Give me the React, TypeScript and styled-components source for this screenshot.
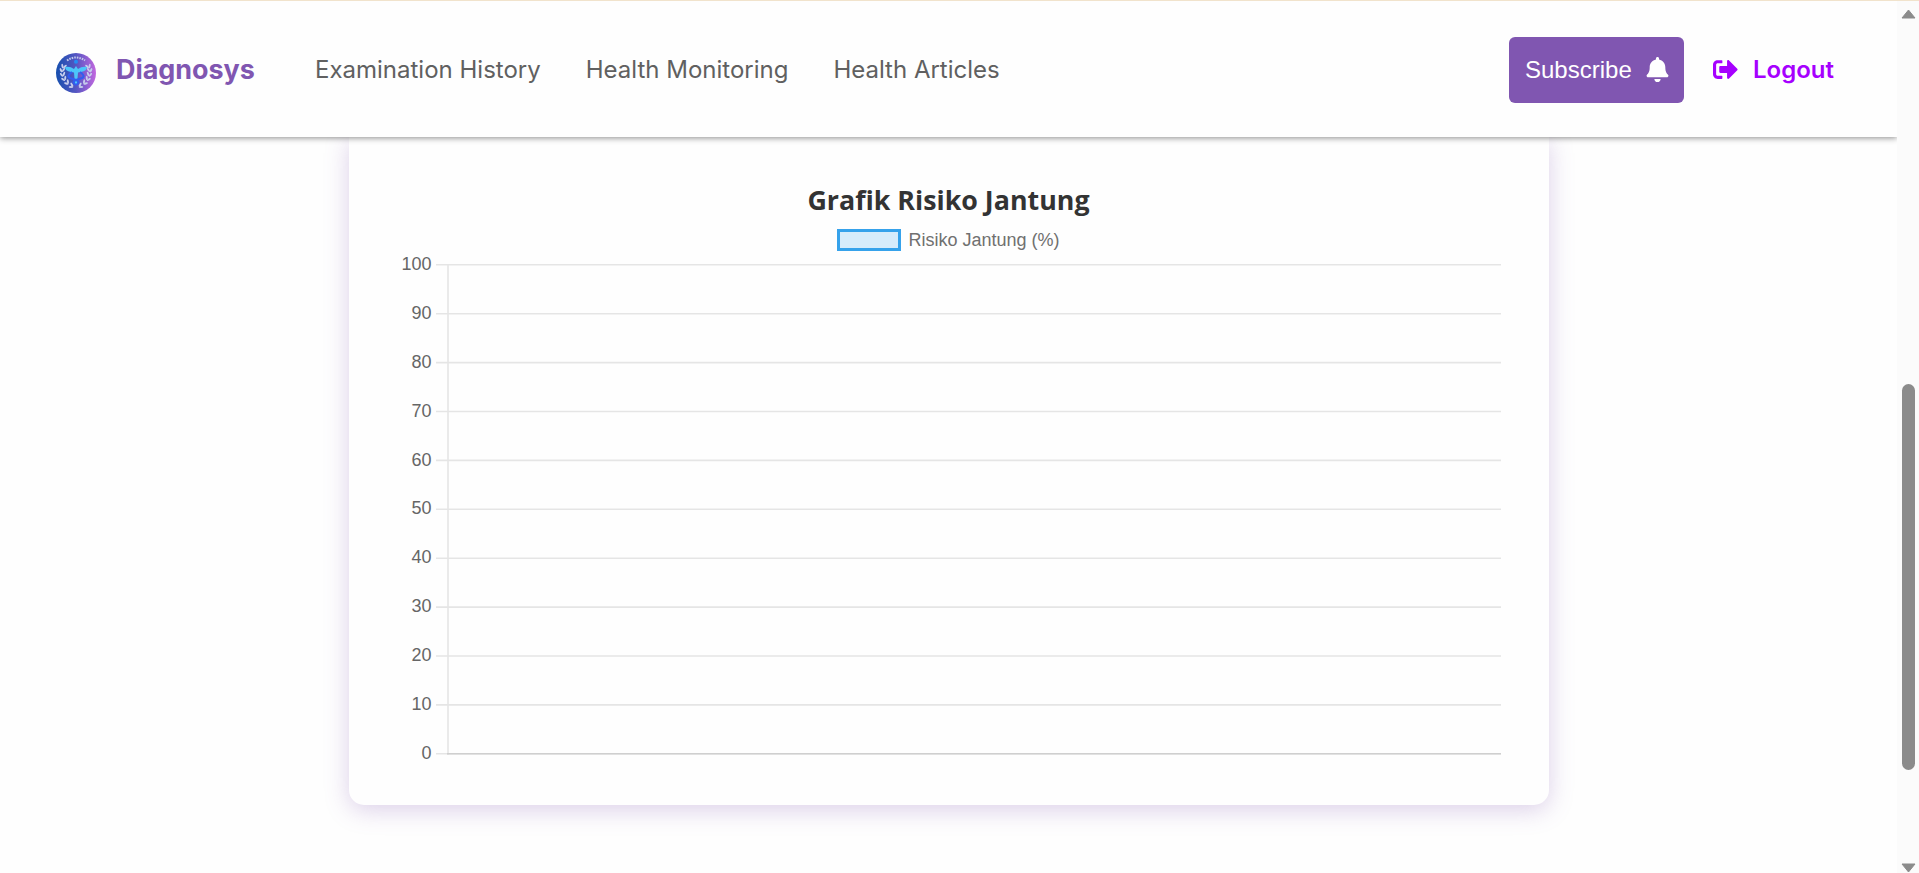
import React from "react";
import styled, { createGlobalStyle } from "styled-components";
import { FaBell, FaSignOutAlt } from "react-icons/fa";

const GlobalStyle = createGlobalStyle`
  * { box-sizing: border-box; }
  body { margin: 0; background: #fefefe; overflow: hidden; }
`;

const Window = styled.div`
  display: grid;
  grid-template-columns: 1897px 22px;
  height: 873px;
  overflow: hidden;
  border-top: 1px solid #f1e3cc;
`;

const Page = styled.div`
  display: flex;
  flex-direction: column;
  align-items: center;
  height: 872px;
  overflow: hidden;
`;

const Navbar = styled.nav`
  position: relative;
  z-index: 1;
  display: flex;
  align-items: center;
  flex: none;
  width: 100%;
  height: 136px;
  padding: 2px 63px 0 56px;
  background: #fefefe;
  box-shadow: 0 1px 6px rgba(0, 0, 0, 0.45);
  font-family: Inter, sans-serif;
`;

const Logo = styled.svg`
  width: 40px;
  height: 40px;
  margin-top: 6px;
`;

const Brand = styled.span`
  width: 199px;
  margin: 0 0 2px 20px;
  color: #8056b1;
  font-size: 26.9px;
  font-weight: 700;
`;

const Links = styled.div`
  display: flex;
  gap: 45px;
  flex: 1;
  margin-bottom: 1px;
`;

const NavLink = styled.a`
  color: #606060;
  font-size: 24px;
  white-space: nowrap;
`;

const SubscribeButton = styled.button`
  display: flex;
  align-items: center;
  gap: 13px;
  width: 175px;
  height: 66px;
  padding: 0 0 0 16px;
  border: 0;
  border-radius: 6px;
  background: #8056b1;
  color: #fff;
  font-family: "Liberation Sans", Arial, sans-serif;
  font-size: 24px;

  svg { margin-bottom: 1px; }
`;

const Logout = styled.a`
  display: flex;
  align-items: center;
  gap: 15px;
  margin: 0 0 2px 29px;
  color: #a600ff;
  font-size: 24px;
  font-weight: 600;
`;

const Card = styled.section`
  display: flex;
  flex-direction: column;
  align-items: center;
  flex: none;
  width: 1200px;
  height: 668px;
  padding: 44px 48px 0;
  background: #fefefe;
  border-radius: 0 0 15px 15px;
  box-shadow: 0 5px 25px rgba(128, 86, 177, 0.28);
`;

const Title = styled.h2`
  margin: 0;
  color: #333;
  font: 700 26.8px/38px "Open Sans", "Noto Sans", sans-serif;
`;

const Legend = styled.div`
  display: flex;
  align-items: center;
  gap: 7px;
  height: 22px;
  margin-top: 10px;
  color: #707070;
  font: 18px/22px "Liberation Sans", Arial, sans-serif;
`;

const Swatch = styled.span`
  width: 64px;
  height: 22px;
  border: 3px solid #36a2eb;
  background: #d7ecfb;
`;

const Chart = styled.div`
  display: grid;
  grid-template-columns: 35px 1065px;
  column-gap: 4px;
  width: 1104px;
  margin-top: 13px;
`;

const Ticks = styled.div`
  display: flex;
  flex-direction: column;
  justify-content: space-between;
  height: 509px;
  margin-top: -10px;
  color: #666;
  text-align: right;
  font: 18px/20px "Liberation Sans", Arial, sans-serif;
`;

const Plot = styled.svg`
  display: block;
  width: 1065px;
  height: 492px;
`;

const Scrollbar = styled.div`
  display: flex;
  flex-direction: column;
  align-items: center;
  background: #fbfbfb;
  padding-top: 8px;
`;

const Arrow = styled.svg`
  flex: none;
  width: 15px;
  height: 10px;
`;

const Thumb = styled.div`
  width: 13px;
  height: 386px;
  margin: 365px 0 93px;
  border-radius: 7px;
  background: #8b8b8b;
`;

const values = [100, 90, 80, 70, 60, 50, 40, 30, 20, 10, 0];

const leaves = [
  [7, 13, 15],
  [5.5, 17, 0],
  [6, 21.5, -15],
  [7.5, 26, -30],
  [10.5, 30, -45],
  [15, 33.5, -65],
];

const Laurel = () => (
  <g fill="#c6cdec">
    {leaves.map(([x, y, turn]) => (
      <g key={y} transform={`rotate(${turn} ${x} ${y})`}>
        <ellipse cx={x - 0.6} cy={y} rx="1" ry="2.3" transform={`rotate(-25 ${x} ${y})`} />
        <ellipse cx={x + 2} cy={y} rx="1" ry="2.3" transform={`rotate(35 ${x + 2} ${y})`} />
      </g>
    ))}
  </g>
);

const Emblem = () => (
  <Logo viewBox="0 0 40 40">
    <defs>
      <linearGradient id="disc">
        <stop offset="0" stopColor="#164fae" />
        <stop offset=".5" stopColor="#5556c2" />
        <stop offset="1" stopColor="#c268df" />
      </linearGradient>
    </defs>
    <circle cx="20" cy="20" r="20" fill="url(#disc)" />
    <Laurel />
    <g transform="translate(40 0) scale(-1 1)"><Laurel /></g>
    <path d="M11 7.5Q20 1.5 29 7.5" fill="none" stroke="#c3c9ea" strokeWidth="2" strokeDasharray="1.6 1" />
    <path d="M9 14Q14 13 18 16L20 13L22 16Q26 13 31 14Q31 18 25 19L22 19.5L21 32H19L18 19.5L15 19Q9 18 9 14Z" fill="#4cc6fa" />
    <path d="M16 19Q10 23 14 25L20 27Q25 29 20 32M24 19Q30 23 26 25L20 27Q15 29 20 32" fill="none" stroke="#315df0" strokeWidth="2" />
    <circle cx="20" cy="8.8" r="2" fill="#238df5" />
  </Logo>
);

export default function App() {
  return (
    <Window>
      <GlobalStyle />
      <Page>
        <Navbar>
          <Emblem />
          <Brand>Diagnosys</Brand>
          <Links>
            <NavLink>Examination History</NavLink>
            <NavLink>Health Monitoring</NavLink>
            <NavLink>Health Articles</NavLink>
          </Links>
          <SubscribeButton>Subscribe<FaBell size={25} /></SubscribeButton>
          <Logout><FaSignOutAlt size={25} />Logout</Logout>
        </Navbar>
        <Card>
          <Title>Grafik Risiko Jantung</Title>
          <Legend><Swatch />Risiko Jantung (%)</Legend>
          <Chart>
            <Ticks>{values.map((v) => <span key={v}>{v}</span>)}</Ticks>
            <Plot viewBox="0 0 1065 492">
              {values.map((v, i) => (
                <path key={v} d={`M0 ${0.8 + i * 48.9}H1065`} stroke="#e5e5e5" strokeWidth="1.6" />
              ))}
              <path d="M12 0V491" stroke="#e5e5e5" strokeWidth="1.6" />
              <path d="M11 489.8H1065" stroke="#cfcfcf" strokeWidth="1.6" />
            </Plot>
          </Chart>
        </Card>
      </Page>
      <Scrollbar>
        <Arrow viewBox="0 0 15 10"><path d="M7.5 1L14 9H1Z" fill="#8b8b8b" stroke="#8b8b8b" strokeLinejoin="round" /></Arrow>
        <Thumb />
        <Arrow viewBox="0 0 15 10"><path d="M7.5 9L14 1H1Z" fill="#8b8b8b" stroke="#8b8b8b" strokeLinejoin="round" /></Arrow>
      </Scrollbar>
    </Window>
  );
}
